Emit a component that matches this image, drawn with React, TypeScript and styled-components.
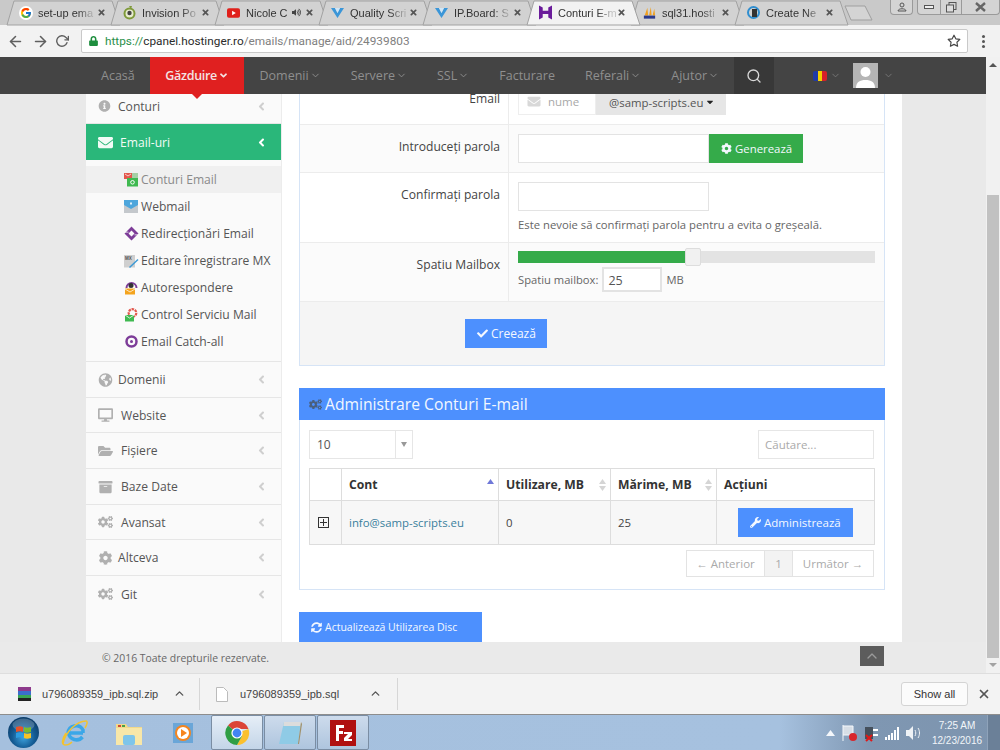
import React from 'react';
import styled, { createGlobalStyle } from 'styled-components';
import { FcGoogle } from 'react-icons/fc';
import {
  FaInfoCircle, FaEnvelope, FaGlobeAmericas, FaDesktop, FaFolderOpen, FaArchive, FaCogs, FaCog,
  FaAngleLeft, FaCheck, FaWrench, FaSyncAlt, FaCaretDown, FaLock, FaTimes, FaAngleDown, FaVolumeUp,
} from 'react-icons/fa';
import { FiArrowLeft, FiArrowRight, FiRotateCw, FiStar, FiSearch, FiChevronDown, FiChevronUp, FiX } from 'react-icons/fi';

const Global = createGlobalStyle`
  html, body { margin: 0; padding: 0; height: 100%; overflow: hidden; }
  * { box-sizing: border-box; }
  body { font-family: "Open Sans", "Liberation Sans", sans-serif; }
`;

const Screen = styled.div`
  width: 1000px; height: 750px; display: flex; flex-direction: column; overflow: hidden; background: #e9e9e9;
`;

/* ---------- browser chrome ---------- */
const TabStrip = styled.div`
  height: 25px; flex: none; background: #c9c9c9; display: flex; padding-left: 6px; position: relative;
`;
const Tab = styled.div<{ $active?: boolean }>`
  width: 104px; height: 25px; flex: none; position: relative; display: flex; align-items: center;
  padding: 0 0 0 13px; font-family: "Liberation Sans", sans-serif; font-size: 11px;
  color: #333; z-index: ${p => (p.$active ? 2 : 1)};
`;
const TabShapeSvg = styled.svg`
  position: absolute; left: 0; top: 0; z-index: -1; overflow: visible;
`;
const TabTitle = styled.span`
  margin-left: 6px; width: 58px; overflow: hidden; white-space: nowrap;
  -webkit-mask-image: linear-gradient(90deg, #000 68%, rgba(0,0,0,.25) 92%);
  mask-image: linear-gradient(90deg, #000 68%, rgba(0,0,0,.25) 92%);
`;
const TabSlot = styled.span`
  width: 13px; height: 13px; display: flex; align-items: center; justify-content: center; flex: none;
`;
const GoogleDisc = styled.span`
  width: 14px; height: 14px; flex: none; border-radius: 50%; background: #fff; display: flex; align-items: center; justify-content: center;
`;
const TabClose = styled(FaTimes)`
  position: absolute; left: 91px; top: 8px; width: 9px; height: 9px; color: #555;
`;
const TabSpeaker = styled(FaVolumeUp)`
  position: absolute; left: 78px; top: 8px; width: 9px; height: 9px; color: #444;
`;
const NewTab = styled.svg`
  position: absolute; left: 844px; top: 5px;
`;
const WindowGroup = styled.div<{ $left: number }>`
  position: absolute; left: ${p => p.$left}px; top: 0; height: 15px; display: flex; border: 1px solid #9a9a9a; border-top: none;
  border-radius: 0 0 4px 4px; background: #d4d4d4; overflow: hidden; color: #555;
`;
const WindowBtn = styled.span<{ $w: number }>`
  width: ${p => p.$w}px; display: flex; align-items: center; justify-content: center;
  & + & { border-left: 1px solid #9a9a9a; }
`;
const Toolbar = styled.div`
  height: 32px; flex: none; background: #f2f2f2; display: flex; align-items: center; color: #666;
`;
const NavIcon = styled.span<{ $w: number }>`
  width: ${p => p.$w}px; display: flex; justify-content: center; align-items: center; flex: none; color: #5f5f5f;
`;
const UrlBar = styled.div`
  width: 887px; height: 24px; margin-left: 7px; background: #fff; border: 1px solid #c9c9c9; border-radius: 2px;
  display: flex; align-items: center; padding: 0 6px 0 7px;
`;
const UrlLock = styled(FaLock)`
  width: 9px; height: 10px; color: #1e8e3e; margin-right: 7px; flex: none;
`;
const UrlText = styled.span`
  flex: 1; color: #808080; white-space: nowrap; font-family: "Roboto", sans-serif; font-size: 11.8px;
`;
const UrlGreen = styled.span` color: #2a8f4a; `;
const UrlDark = styled.span` color: #2b2b2b; `;
const Kebab = styled.span`
  width: 3px; height: 3px; border-radius: 50%; background: #555; display: block; box-shadow: 0 5px 0 #555, 0 -5px 0 #555; margin-left: 14px;
`;

const Viewport = styled.div`
  height: 616px; flex: none; display: flex;
`;
const PageCol = styled.div`
  width: 986px; flex: none; display: flex; flex-direction: column; position: relative;
`;
const Scrollbar = styled.div`
  width: 14px; flex: none; background: #f1f1f1; display: flex; flex-direction: column; align-items: center;
`;
const ScrollSpacer = styled.div` height: 128px; flex: none; `;
const ScrollThumb = styled.div` width: 12px; height: 463px; background: #c1c1c1; flex: none; `;
const ScrollArrow = styled.span<{ $up?: boolean }>`
  width: 0; height: 0; border-left: 4px solid transparent; border-right: 4px solid transparent;
  ${p => (p.$up ? 'border-bottom: 4px solid #555; margin-top: 6px;' : 'border-top: 4px solid #a3a3a3; margin-top: 5px;')}
`;

/* ---------- site nav ---------- */
const TopNav = styled.nav`
  height: 37px; flex: none; background: #444; display: flex; padding-left: 86px; position: relative; z-index: 3;
  font-size: 12.5px; color: #8f8f8f;
`;
const NavItem = styled.div<{ $active?: boolean }>`
  padding: 0 15px; display: flex; align-items: center; gap: 1px; white-space: nowrap; position: relative;
  ${p => p.$active && 'padding: 0 15.5px; background: #e02020; color: #f3e3e3; font-weight: 600; letter-spacing: -.3px;'}
`;
const NavTip = styled.span`
  position: absolute; left: 50%; bottom: -5px; margin-left: -5px; width: 0; height: 0;
  border-left: 5px solid transparent; border-right: 5px solid transparent; border-top: 5px solid #e02020;
`;
const SearchCell = styled.div`
  width: 40px; background: #383838; display: flex; align-items: center; justify-content: center; color: #d8d8d8;
`;
const FlagBox = styled.div`
  margin-left: 39px; display: flex; align-items: center; color: #777;
`;
const Flag = styled.div`
  width: 14px; height: 10px; display: flex; border-radius: 2px; overflow: hidden; margin-right: 3px;
`;
const FlagPart = styled.span<{ $c: string }>` flex: 1; background: ${p => p.$c}; `;
const Avatar = styled.div`
  width: 25px; height: 25px; background: #b5b5b5; margin: 6px 5px 0 12px; overflow: hidden;
`;
const AvatarChevron = styled.div`
  display: flex; align-items: center; color: #777;
`;

/* ---------- body ---------- */
const Body = styled.div`
  flex: 1; min-height: 0; display: flex; padding: 0 84px 0 86px; background: #e9e9e9;
`;
const Sidebar = styled.aside`
  width: 195px; flex: none; background: #fafafa; display: flex; flex-direction: column;
`;
const SideRow = styled.div<{ $h: number; $active?: boolean; $gap: number; $pb?: number; $last?: boolean }>`
  height: ${p => p.$h}px; flex: none; display: flex; align-items: center; padding: 0 15px ${p => p.$pb ?? 0}px 12px;
  color: ${p => (p.$active ? '#f2fbf6' : '#555')}; background: ${p => (p.$active ? '#2ab77a' : 'transparent')};
  font-size: 12.1px; border-bottom: ${p => (p.$active || p.$last ? 'none' : '1px solid #e6e6e6')};
  & > svg:first-child { color: ${p => (p.$active ? '#f2fbf6' : '#b0b0b0')}; width: ${p => p.$gap}px; flex: none; }
`;
const SideLabel = styled.span<{ $ml: number }>`
  flex: 1; margin-left: ${p => p.$ml}px; white-space: nowrap;
`;
const SideAngle = styled(FaAngleLeft)<{ $active?: boolean }>`
  width: 9px; height: 13px; color: ${p => (p.$active ? '#fff' : '#cfcfcf')}; flex: none;
`;
const SubMenu = styled.div`
  height: 202px; flex: none; padding-top: 6px; border-bottom: 1px solid #e6e6e6;
`;
const SubItem = styled.div<{ $current?: boolean }>`
  height: 27px; display: flex; align-items: center; padding-left: 38px; font-size: 12.1px; white-space: nowrap;
  color: ${p => (p.$current ? '#8a8a8a' : '#555')}; background: ${p => (p.$current ? '#f0f0f0' : 'transparent')};
`;
const SubIcon = styled.svg` width: 15px; height: 15px; flex: none; margin-right: 2px; `;

const Main = styled.main`
  width: 621px; flex: none; background: #fff; border-left: 1px solid #ececec; padding: 0 17px; display: flex; flex-direction: column; font-size: 12px; color: #444;
`;
const FormPanel = styled.section`
  height: 272px; flex: none; border: 1px solid #d6e4f6; border-top: none; display: flex; flex-direction: column;
`;
const FormRow = styled.div<{ $h: number; $alt?: boolean }>`
  height: ${p => p.$h}px; flex: none; display: grid; grid-template-columns: 209px 1fr;
  background: ${p => (p.$alt ? '#fbfbfb' : '#fff')}; border-bottom: 1px solid #ececec;
`;
const FormLabel = styled.div<{ $pt: number; $lh?: number }>`
  text-align: right; padding: ${p => p.$pt}px 8px 0 0; border-right: 1px solid #ececec; font-size: 12.1px; color: #444;
  line-height: ${p => p.$lh ?? 18}px;
`;
const FormValue = styled.div<{ $pt: number }>`
  padding: ${p => p.$pt}px 10px 0 9px; position: relative;
`;
const InputGroup = styled.div` display: flex; `;
const MailField = styled.div`
  width: 78px; height: 21px; border: 1px solid #eee; border-top: none; background: #fff; display: flex; align-items: center;
  padding: 0 0 5px 8px; font-size: 11.5px; color: #a8a8a8; gap: 7px;
`;
const MailIcon = styled(FaEnvelope)` width: 14px; height: 13px; color: #d8d8d8; `;
const DomainBtn = styled.div`
  width: 130px; height: 21px; background: #e6e6e6; display: flex; align-items: center; padding: 0 0 5px 13px; font-size: 11.4px; color: #555; gap: 3px;
`;
const Caret = styled(FaCaretDown)` width: 8px; height: 10px; color: #222; `;
const TextBox = styled.div`
  width: 191px; height: 29px; border: 1px solid #e3e3e3; background: #fff;
`;
const Hint = styled.div`
  margin-top: 6px; font-size: 11.3px; line-height: 16px; color: #666; white-space: nowrap;
`;
const SliderTrack = styled.div`
  height: 12px; background: #e3e3e3; position: relative; width: 357px;
`;
const SliderFill = styled.div`
  height: 100%; background: #35ab4a;
`;
const SliderHandle = styled.div`
  position: absolute; top: -3px; width: 16px; height: 18px; background: #f1f1f1; border: 1px solid #ddd; border-radius: 2px;
`;
const MailboxLine = styled.div`
  display: flex; align-items: center; margin-top: 4px; font-size: 11.2px; color: #666;
`;
const SmallInput = styled.div`
  width: 60px; height: 25px; margin: 0 4px; border: 2px solid #e3e3e3; background: #fff; color: #555; font-size: 12.5px; padding: 3px 4px; line-height: 18px;
`;
const FormFoot = styled.div`
  flex: 1; background: #f5f5f5; padding: 17px 0 0 165px;
`;
const ActionBtn = styled.div<{ $w: number; $h: number; $fs: number; $green?: boolean }>`
  width: ${p => p.$w}px; height: ${p => p.$h}px; background: ${p => (p.$green ? '#35ab4a' : '#4d90fe')}; color: #f4f8ff; font-size: ${p => p.$fs}px;
  display: flex; align-items: center; padding-left: 12px; gap: 3px; flex: none; white-space: nowrap;
`;
const ListPanel = styled.section`
  height: 202px; margin-top: 22px; flex: none; border: 1px solid #d6e4f6; border-top: none;
`;
const ListHead = styled.h2`
  height: 32px; margin: 0 -1px; padding-left: 10px; background: #4d90fe; color: #f2f7ff; font-weight: 400; font-size: 15.7px;
  display: flex; align-items: center; gap: 3px;
`;
const HeadIcon = styled(FaCogs)` width: 13px; height: 11px; color: #4a5f7d; `;
const ListBody = styled.div` padding: 10px 10px 0 9px; `;
const ListTools = styled.div`
  display: flex; justify-content: space-between; height: 29px; width: 565px;
`;
const PageSize = styled.div`
  width: 104px; border: 1px solid #e6e6e6; display: flex; font-size: 12px; color: #555; align-items: center;
`;
const PageSizeVal = styled.span`
  flex: 1; padding-left: 7px; line-height: 27px; border-right: 1px solid #e6e6e6; height: 100%;
`;
const PageSizeArrow = styled.span`
  width: 16px; display: flex; justify-content: center;
  &::before { content: ""; border-left: 3px solid transparent; border-right: 3px solid transparent; border-top: 5px solid #999; }
`;
const SearchBox = styled.div`
  width: 116px; border: 1px solid #e6e6e6; padding-left: 6px; line-height: 27px; font-size: 11.5px; color: #aaa;
`;
const Table = styled.table`
  margin-top: 9px; width: 566px; border-collapse: collapse; table-layout: fixed; font-size: 11.4px; color: #444;
`;
const Th = styled.th<{ $w?: number }>`
  width: ${p => (p.$w ? `${p.$w}px` : 'auto')}; height: 32px; border: 1px solid #ddd; text-align: left; padding: 0 7px; color: #333; font-size: 12.2px; position: relative; white-space: nowrap; font-weight: 700;
`;
const Td = styled.td`
  height: 44px; border: 1px solid #ddd; background: #f7f7f7; padding: 0 7px; white-space: nowrap;
`;
const SortIcon = styled.svg`
  position: absolute; right: 3px; top: 9px;
`;
const MailLink = styled.span` color: #3a7f9d; `;
const ExpandBox = styled.span`
  display: block; width: 11px; height: 11px; border: 1px solid #333; margin-left: 1px; position: relative;
  &::before { content: ""; position: absolute; left: 1px; right: 1px; top: 4px; height: 1px; background: #333; }
  &::after { content: ""; position: absolute; top: 1px; bottom: 1px; left: 4px; width: 1px; background: #333; }
`;
const ActionCell = styled.div` display: flex; justify-content: center; `;
const Pager = styled.div`
  display: flex; justify-content: flex-end; margin-top: 5px; width: 565px; font-size: 11.5px; color: #aaa;
`;
const PagerBtn = styled.div<{ $w: number; $cur?: boolean }>`
  width: ${p => p.$w}px; height: 27px; border: 1px solid #e3e3e3; display: flex; align-items: center; justify-content: center; white-space: nowrap;
  background: ${p => (p.$cur ? '#f3f3f3' : '#fff')}; & + & { border-left: none; }
`;
const RefreshRow = styled.div` margin-top: 22px; `;

const Footer = styled.footer`
  height: 31px; flex: none; background: #eaeaea; display: flex; align-items: center; padding: 0 102px; font-size: 10.4px; color: #666; justify-content: space-between;
`;
const ToTop = styled.div`
  width: 24px; height: 20px; background: #5c5c5c; color: #9a9a9a; display: flex; align-items: center; justify-content: center; margin-top: -4px;
`;

/* ---------- downloads ---------- */
const Downloads = styled.div`
  height: 42px; flex: none; background: #f3f3f3; border-top: 1px solid #dedede; border-bottom: 1px solid #8d8d8d; display: flex; align-items: center; font-family: "Liberation Sans", sans-serif; color: #444; font-size: 11px;
`;
const DlItem = styled.div<{ $w: number; $pl: number }>`
  width: ${p => p.$w}px; height: 32px; border-right: 1px solid #d6d6d6; display: flex; align-items: center; padding-left: ${p => p.$pl}px; position: relative; flex: none;
`;
const DlName = styled.span` margin-left: 10px; `;
const DlChevron = styled(FiChevronUp)<{ $left: number }>`
  position: absolute; left: ${p => p.$left}px; top: 9px; width: 13px; height: 13px; color: #555; stroke-width: 2.5;
`;
const DlSpacer = styled.div` flex: 1; `;
const ShowAll = styled.div`
  width: 67px; height: 24px; background: #fbfbfb; border: 1px solid #d4d4d4; border-radius: 3px; display: flex; align-items: center; justify-content: center; font-size: 11px; color: #333;
`;
const DlClose = styled(FiX)`
  width: 14px; height: 14px; margin: 0 9px; color: #555; stroke-width: 3;
`;

/* ---------- taskbar ---------- */
const Taskbar = styled.div`
  height: 35px; flex: none; background: linear-gradient(90deg, #a5c0de 0, #a6c1df 78%, #7f97b2 87%, #7d94ae 100%);
  display: flex; align-items: center; position: relative;
`;
const Orb = styled.svg` margin-left: 8px; flex: none; `;
const TaskSlot = styled.div<{ $w: number; $open?: boolean; $active?: boolean }>`
  width: ${p => p.$w}px; height: 35px; flex: none; display: flex; align-items: center; justify-content: center; border-radius: 2px;
  ${p => p.$open && `border: 1px solid #7a8da3; margin-right: 1px; background: ${p.$active ? 'linear-gradient(#e6eef7,#c3d5e8)' : 'linear-gradient(#cddbec,#aec5de)'};`}
`;
const Tray = styled.div`
  position: absolute; left: 826px; top: 0; height: 35px; display: flex; align-items: center; gap: 6px; color: #f4f7fb;
`;
const Clock = styled.div`
  position: absolute; left: 926px; top: 0; width: 62px; font-family: "Liberation Sans", sans-serif; height: 35px; font-size: 10px; color: #f2f5f9; text-align: center; line-height: 15px; padding-top: 3px; white-space: nowrap;
`;
const ShowDesktop = styled.div`
  position: absolute; right: 0; top: 0; width: 13px; height: 35px; background: #6b8098; border-left: 1px solid #8fa3ba;
`;

/* ---------- drawings ---------- */
const TabShape = ({ active }: { active?: boolean }) => (
  <TabShapeSvg width="116" height="25" viewBox="0 0 116 25">
    <path d="M1 25 L8 1 H106 L114 25 Z" fill={active ? '#f2f2f2' : '#d2d2d2'} stroke="#a2a2a2" strokeWidth="1" />
  </TabShapeSvg>
);
const Yt = () => (
  <svg width="14" height="10" viewBox="0 0 14 10"><rect width="14" height="10" rx="2" fill="#e0201b" /><path d="M5.500 2.500 9.500 5l-4 2.500z" fill="#fff" /></svg>
);
const Ips = () => (
  <svg width="13" height="14" viewBox="0 0 13 14"><circle cx="6.500" cy="7.500" r="5" fill="#e8ecd0" stroke="#7f9a3a" strokeWidth="2" /><circle cx="6.500" cy="7" r="2.200" fill="#444" /><path d="M6 0h3l-1 3z" fill="#7f9a3a" /></svg>
);
const Qs = () => (
  <svg width="13" height="12" viewBox="0 0 13 12"><path d="M0 1h4l2.500 5L9 1h4L6.500 11z" fill="#3b96d8" /><path d="M4 1h5L6.500 6z" fill="#cfe6f7" /></svg>
);
const Host = () => (
  <svg width="14" height="15" viewBox="0 0 14 15"><path d="M0 0l4 2v3.500h6V2l4-2v15l-4-2V9H4v4l-4 2z" fill="#6a1b9a" /></svg>
);
const Pma = () => (
  <svg width="15" height="14" viewBox="0 0 15 14"><path d="M2 10 5 1l1 9zM7 10l2-10 1 10zM11 10l2-8 1 8z" fill="#f0a020" /><rect x="1" y="10" width="13" height="3.500" fill="#2a3a8c" /></svg>
);
const Globe = () => (
  <svg width="13" height="13" viewBox="0 0 13 13"><circle cx="6.500" cy="6.500" r="5.500" fill="none" stroke="#2f8ed0" strokeWidth="2" /><rect x="5" y="3" width="5" height="8" fill="#333" /></svg>
);
const Chrome = ({ s = 26 }: { s?: number }) => (
  <svg width={s} height={s} viewBox="0 0 26 26">
    <path d="M13 13 4 5.500A12 12 0 0 1 24.500 9H13z" fill="#db4437" />
    <path d="M13 13 24.500 9A12 12 0 0 1 13 25l5-9z" fill="#fbc02d" />
    <path d="M13 13l5 3-5 9A12 12 0 0 1 4 5.500z" fill="#2f9e44" />
    <circle cx="13" cy="13" r="5.600" fill="#fff" /><circle cx="13" cy="13" r="4.400" fill="#4285f4" />
  </svg>
);
const Person = () => (
  <svg width="25" height="25" viewBox="0 0 25 25"><circle cx="12.500" cy="9" r="5" fill="#fff" /><path d="M3 25c0-6 4-8 9.500-8S22 19 22 25z" fill="#fff" /></svg>
);

type SubDef = { label: string; icon: React.ReactNode; current?: boolean };
const subItems: SubDef[] = [
  { label: 'Conturi Email', current: true, icon: <><rect x="0" y="1" width="8" height="6" fill="#e2574c" /><rect x="8" y="1" width="6" height="5" fill="#a5cfa5" /><rect x="3" y="6" width="11" height="8.500" fill="#3fb950" /><circle cx="8.500" cy="10.300" r="1.800" fill="none" stroke="#fff" /><path d="M1 2l3 2 3-2" fill="none" stroke="#fff" strokeWidth=".7" /></> },
  { label: 'Webmail', icon: <><rect x="0" y="4" width="14" height="10" fill="#c4c8cc" /><path d="M0 1h14v5l-7 4-7-4z" fill="#4ea6dc" /><path d="M6 3.500h2v2H6z" fill="#dff0fb" /></> },
  { label: 'Redirecționări Email', icon: <><path d="M7.500.500 14.500 7.500 7.500 14.500.500 7.500zM7.500 4.500 4.500 7.500 7.500 10.500 10.500 7.500z" fill="#7d3c98" fillRule="evenodd" /><path d="M1 5.800h3.500v.8H1zM10.500 8.400H14v.8h-3.500z" fill="#fafafa" /></> },
  { label: 'Editare înregistrare MX', icon: <><rect x="0" y="2" width="11" height="12.500" fill="#cfcfcf" /><text x="1" y="7" fontSize="4.500" fontWeight="700" fontFamily="Liberation Sans" fill="#555">MX</text><path d="M5 14 13.500 6l1 1L6 15z" fill="#3c9ad6" /></> },
  { label: 'Autorespondere', icon: <><path d="M2.500 8a5 5 0 0 1 10 0" fill="none" stroke="#7d3c98" strokeWidth="2" /><circle cx="7" cy="5.500" r="2.500" fill="#333" /><rect x="1" y="8.500" width="10" height="6" fill="#f4a41e" /><path d="M1 9l5 3 5-3" fill="none" stroke="#fff" strokeWidth=".7" /></> },
  { label: 'Control Serviciu Mail', icon: <><circle cx="8.500" cy="6" r="3.800" fill="none" stroke="#e2574c" strokeWidth="2.200" strokeDasharray="2.500 .8" /><rect x="1" y="8" width="9" height="6.500" fill="#3fb950" /><path d="M1 8l4.500 3L10 8" fill="none" stroke="#fff" strokeWidth=".8" /></> },
  { label: 'Email Catch-all', icon: <><circle cx="7.500" cy="7.500" r="5" fill="none" stroke="#7d3c98" strokeWidth="2.500" /><circle cx="7.500" cy="7.500" r="1.500" fill="#7d3c98" /></> },
];

const lowerRows = [
  { label: 'Domenii', Icon: FaGlobeAmericas, ml: 5, gap: 15, h: 36 },
  { label: 'Website', Icon: FaDesktop, ml: 8, gap: 15, h: 35 },
  { label: 'Fișiere', Icon: FaFolderOpen, ml: 8, gap: 15, h: 36 },
  { label: 'Baze Date', Icon: FaArchive, ml: 8, gap: 15, h: 36 },
  { label: 'Avansat', Icon: FaCogs, ml: 8, gap: 15, h: 35 },
  { label: 'Altceva', Icon: FaCog, ml: 5, gap: 15, h: 36 },
  { label: 'Git', Icon: FaCogs, ml: 8, gap: 15, h: 36 },
];

const tabs: { title: string; icon: React.ReactNode; active?: boolean; sound?: boolean }[] = [
  { title: 'set-up ema', icon: <GoogleDisc><FcGoogle size={12} /></GoogleDisc> },
  { title: 'Invision Po', icon: <Ips /> },
  { title: 'Nicole C', icon: <Yt />, sound: true },
  { title: 'Quality Scri', icon: <Qs /> },
  { title: 'IP.Board: S', icon: <Qs /> },
  { title: 'Conturi E-m', icon: <Host />, active: true },
  { title: 'sql31.hosti', icon: <Pma /> },
  { title: 'Create Ne', icon: <Globe /> },
];

const Sort = ({ up }: { up?: boolean }) => (
  <SortIcon width="9" height="14" viewBox="0 0 9 14">
    <path d="M4.500 1 8 6H1z" fill={up ? '#6f78d8' : '#d5d5d5'} />
    {!up && <path d="M4.500 13 1 8h7z" fill="#d5d5d5" />}
  </SortIcon>
);

export default function App() {
  return (
    <Screen>
      <Global />
      <TabStrip>
        {tabs.map(t => (
          <Tab key={t.title} $active={t.active}>
            <TabShape active={t.active} />
            <TabSlot>{t.icon}</TabSlot>
            <TabTitle>{t.title}</TabTitle>
            {t.sound && <TabSpeaker />}
            <TabClose />
          </Tab>
        ))}
        <NewTab width="30" height="16" viewBox="0 0 30 16"><path d="M1 1h20l7 14H7z" fill="#d4d4d4" stroke="#9f9f9f" /></NewTab>
        <WindowGroup $left={890}>
          <WindowBtn $w={21}><svg width="10" height="10" viewBox="0 0 10 10"><circle cx="5" cy="3" r="2" fill="none" stroke="#555" /><path d="M1 9c0-3 8-3 8 0z" fill="none" stroke="#555" /></svg></WindowBtn>
        </WindowGroup>
        <WindowGroup $left={917}>
          <WindowBtn $w={22}><svg width="10" height="4" viewBox="0 0 10 4"><rect x=".5" y=".5" width="9" height="3" fill="#eee" stroke="#555" /></svg></WindowBtn>
          <WindowBtn $w={21}><svg width="11" height="11" viewBox="0 0 11 11"><rect x="3" y=".5" width="7" height="7" fill="none" stroke="#555" /><rect x=".5" y="3" width="7" height="7" fill="#ddd" stroke="#555" /></svg></WindowBtn>
          <WindowBtn $w={38}><svg width="11" height="10" viewBox="0 0 11 10"><path d="M1 1l9 8M10 1 1 9" stroke="#666" strokeWidth="2.400" /></svg></WindowBtn>
        </WindowGroup>
      </TabStrip>
      <Toolbar>
        <NavIcon $w={30}><FiArrowLeft size={17} strokeWidth={2.2} /></NavIcon>
        <NavIcon $w={20}><FiArrowRight size={17} strokeWidth={2.2} /></NavIcon>
        <NavIcon $w={24}><FiRotateCw size={14} strokeWidth={2.4} /></NavIcon>
        <UrlBar>
          <UrlLock />
          <UrlText><UrlGreen>https://</UrlGreen><UrlDark>cpanel.hostinger.ro</UrlDark>/emails/manage/aid/24939803</UrlText>
          <FiStar size={14} color="#444" strokeWidth={2} />
        </UrlBar>
        <Kebab />
      </Toolbar>
      <Viewport>
        <PageCol>
          <TopNav>
            <NavItem>Acasă</NavItem>
            <NavItem $active>Găzduire<FaAngleDown size={11} /><NavTip /></NavItem>
            <NavItem>Domenii<FiChevronDown size={11} /></NavItem>
            <NavItem>Servere<FiChevronDown size={11} /></NavItem>
            <NavItem>SSL<FiChevronDown size={11} /></NavItem>
            <NavItem>Facturare</NavItem>
            <NavItem>Referali<FiChevronDown size={11} /></NavItem>
            <NavItem>Ajutor<FiChevronDown size={11} /></NavItem>
            <SearchCell><FiSearch size={16} /></SearchCell>
            <FlagBox>
              <Flag><FlagPart $c="#1f3aa8" /><FlagPart $c="#f5d000" /><FlagPart $c="#d8202a" /></Flag>
              <FiChevronDown size={11} />
            </FlagBox>
            <Avatar><Person /></Avatar>
            <AvatarChevron><FiChevronDown size={11} /></AvatarChevron>
          </TopNav>
          <Body>
            <Sidebar>
              <SideRow $h={30} $gap={13} $pb={5}>
                <FaInfoCircle size={12} />
                <SideLabel $ml={7}>Conturi</SideLabel>
                <SideAngle />
              </SideRow>
              <SideRow $h={36} $gap={15} $active>
                <FaEnvelope size={15} />
                <SideLabel $ml={7}>Email-uri</SideLabel>
                <SideAngle $active />
              </SideRow>
              <SubMenu>
                {subItems.map(s => (
                  <SubItem key={s.label} $current={s.current}>
                    <SubIcon viewBox="0 0 15 15">{s.icon}</SubIcon>
                    {s.label}
                  </SubItem>
                ))}
              </SubMenu>
              {lowerRows.map((r, i) => (
                <SideRow key={r.label} $h={r.h} $gap={r.gap} $last={i === lowerRows.length - 1}>
                  <r.Icon size={14} />
                  <SideLabel $ml={r.ml}>{r.label}</SideLabel>
                  <SideAngle />
                </SideRow>
              ))}
            </Sidebar>
            <Main>
              <FormPanel>
                <FormRow $h={31}>
                  <FormLabel $pt={0} $lh={10}>Email</FormLabel>
                  <FormValue $pt={0}>
                    <InputGroup>
                      <MailField><MailIcon />nume</MailField>
                      <DomainBtn>@samp-scripts.eu<Caret /></DomainBtn>
                    </InputGroup>
                  </FormValue>
                </FormRow>
                <FormRow $h={48} $alt>
                  <FormLabel $pt={13}>Introduceți parola</FormLabel>
                  <FormValue $pt={9}>
                    <InputGroup>
                      <TextBox />
                      <ActionBtn $green $w={94} $h={29} $fs={11.4}><FaCog size={11} />Generează</ActionBtn>
                    </InputGroup>
                  </FormValue>
                </FormRow>
                <FormRow $h={70}>
                  <FormLabel $pt={13}>Confirmați parola</FormLabel>
                  <FormValue $pt={9}>
                    <TextBox />
                    <Hint>Este nevoie să confirmați parola pentru a evita o greșeală.</Hint>
                  </FormValue>
                </FormRow>
                <FormRow $h={59} $alt>
                  <FormLabel $pt={13}>Spatiu Mailbox</FormLabel>
                  <FormValue $pt={8}>
                    <SliderTrack>
                      <SliderFill style={{ width: 170 }} />
                      <SliderHandle style={{ left: 167 }} />
                    </SliderTrack>
                    <MailboxLine>Spatiu mailbox:<SmallInput>25</SmallInput>MB</MailboxLine>
                  </FormValue>
                </FormRow>
                <FormFoot>
                  <ActionBtn $w={82} $h={29} $fs={12}><FaCheck size={11} />Creează</ActionBtn>
                </FormFoot>
              </FormPanel>
              <ListPanel>
                <ListHead><HeadIcon />Administrare Conturi E-mail</ListHead>
                <ListBody>
                  <ListTools>
                    <PageSize><PageSizeVal>10</PageSizeVal><PageSizeArrow /></PageSize>
                    <SearchBox>Căutare...</SearchBox>
                  </ListTools>
                  <Table>
                    <thead>
                      <tr>
                        <Th $w={32} />
                        <Th $w={157}>Cont<Sort up /></Th>
                        <Th $w={112}>Utilizare, MB<Sort /></Th>
                        <Th $w={106}>Mărime, MB<Sort /></Th>
                        <Th>Acțiuni</Th>
                      </tr>
                    </thead>
                    <tbody>
                      <tr>
                        <Td><ExpandBox /></Td>
                        <Td><MailLink>info@samp-scripts.eu</MailLink></Td>
                        <Td>0</Td>
                        <Td>25</Td>
                        <Td><ActionCell><ActionBtn $w={115} $h={29} $fs={11.5}><FaWrench size={11} />Administrează</ActionBtn></ActionCell></Td>
                      </tr>
                    </tbody>
                  </Table>
                  <Pager>
                    <PagerBtn $w={79}>← Anterior</PagerBtn>
                    <PagerBtn $w={28} $cur>1</PagerBtn>
                    <PagerBtn $w={81}>Următor →</PagerBtn>
                  </Pager>
                </ListBody>
              </ListPanel>
              <RefreshRow>
                <ActionBtn $w={183} $h={30} $fs={10.5}><FaSyncAlt size={11} />Actualizează Utilizarea Disc</ActionBtn>
              </RefreshRow>
            </Main>
          </Body>
          <Footer>
            <span>© 2016 Toate drepturile rezervate.</span>
            <ToTop><FiChevronUp size={16} /></ToTop>
          </Footer>
        </PageCol>
        <Scrollbar>
          <ScrollArrow $up />
          <ScrollSpacer />
          <ScrollThumb />
          <ScrollArrow />
        </Scrollbar>
      </Viewport>
      <Downloads>
        <DlItem $w={200} $pl={17}>
          <svg width="15" height="16" viewBox="0 0 15 16"><rect x="1" y="1" width="13" height="4" fill="#8e3a8c" /><rect x="1" y="5" width="13" height="4" fill="#3a6ecb" /><rect x="1" y="9" width="13" height="3" fill="#3aa655" /><rect x="1" y="12" width="13" height="3" fill="#222" /></svg>
          <DlName>u796089359_ipb.sql.zip</DlName>
          <DlChevron $left={173} />
        </DlItem>
        <DlItem $w={198} $pl={16}>
          <svg width="14" height="15" viewBox="0 0 14 15"><path d="M.5.5h7l4 4v10H.5z" fill="#fff" stroke="#bbb" /></svg>
          <DlName>u796089359_ipb.sql</DlName>
          <DlChevron $left={169} />
        </DlItem>
        <DlSpacer />
        <ShowAll>Show all</ShowAll>
        <DlClose />
      </Downloads>
      <Taskbar>
        <Orb width="31" height="31" viewBox="0 0 31 31">
          <defs>
            <radialGradient id="orbFill" cx="50%" cy="65%" r="60%">
              <stop offset="0" stopColor="#3fa4e0" />
              <stop offset=".6" stopColor="#145c95" />
              <stop offset="1" stopColor="#0d3f6c" />
            </radialGradient>
          </defs>
          <circle cx="15.500" cy="15.500" r="15.500" fill="url(#orbFill)" />
          <ellipse cx="15.500" cy="8" rx="11" ry="6.500" fill="#fff" opacity=".22" />
          <path d="M8 10c3-1 5-1 7 0v5c-2-1-4-1-7 0z" fill="#e5522b" />
          <path d="M16 10c2 1 4 1 7 0v5c-3 1-5 1-7 0z" fill="#7cbb2d" />
          <path d="M8 16c3-1 5-1 7 0v5c-2-1-4-1-7 0z" fill="#2e9ce0" />
          <path d="M16 16c2 1 4 1 7 0v5c-3 1-5 1-7 0z" fill="#f8c326" />
        </Orb>
        <TaskSlot $w={17} />
        <TaskSlot $w={38}>
          <svg width="28" height="28" viewBox="0 0 28 28"><path d="M22 14H7M7 14a8 8 0 0 1 15-3v3M21.500 18a8 8 0 0 1-14-4" fill="none" stroke="#3ba7e8" strokeWidth="3.500" /><path d="M2 25C4 13 16 2 25 2c2 0 1 4-1 7M5 14C1 20 0 26 4 26c2 0 5-1 7-3" fill="none" stroke="#f2c230" strokeWidth="1.500" /></svg>
        </TaskSlot>
        <TaskSlot $w={16} />
        <TaskSlot $w={38}>
          <svg width="28" height="26" viewBox="0 0 28 26"><path d="M1 4h10l2 3h14v18H1z" fill="#f2d98a" /><rect x="1" y="8" width="26" height="17" fill="#f8e7a8" /><rect x="8" y="15" width="12" height="10" rx="2" fill="#7ec5ea" /><rect x="3" y="5" width="3" height="2" fill="#d04a3a" /><rect x="7" y="5" width="3" height="2" fill="#4aa04a" /></svg>
        </TaskSlot>
        <TaskSlot $w={18} />
        <TaskSlot $w={36}>
          <svg width="24" height="24" viewBox="0 0 24 24"><rect x="1" y="2" width="20" height="20" fill="#6aa6d8" /><circle cx="11" cy="12" r="8" fill="#f6851f" /><circle cx="11" cy="12" r="6" fill="#fff" /><path d="M9 8l6 4-6 4z" fill="#f6851f" /></svg>
        </TaskSlot>
        <TaskSlot $w={9} />
        <TaskSlot $w={52} $open $active><Chrome /></TaskSlot>
        <TaskSlot $w={52} $open>
          <svg width="28" height="28" viewBox="0 0 28 28"><path d="M8 3h17l-3 22H3z" fill="#8fcbe6" /><path d="M8 3h17l-.5 4H7.300z" fill="#dcdcdc" /><path d="M22 25 25 3l1 2-3 20z" fill="#a0906a" /></svg>
        </TaskSlot>
        <TaskSlot $w={52} $open>
          <svg width="28" height="28" viewBox="0 0 28 28"><rect x="1" y="1" width="26" height="26" fill="#b01010" /><path d="M7 6h8v3h-5v3h4v3h-4v7H7zM15 13h8v3l-4 4h4v2h-8v-3l4-4h-4z" fill="#fff" /></svg>
        </TaskSlot>
        <Tray>
          <svg width="9" height="6" viewBox="0 0 9 6"><path d="M4.500 0 9 6H0z" fill="#f4f7fb" /></svg>
          <svg width="17" height="18" viewBox="0 0 17 18"><path d="M2 1v16M2 2h10v9H2" fill="#d7dee6" stroke="#f4f7fb" /><circle cx="12" cy="13" r="4" fill="#d8262c" /></svg>
          <svg width="15" height="18" viewBox="0 0 15 18"><rect x="1" y="3" width="8" height="12" fill="#45505c" /><path d="M9 6h5M9 11h5" stroke="#fff" strokeWidth="2" /><path d="M2 11l6 6M8 11l-6 6" stroke="#e01818" strokeWidth="2" /></svg>
          <svg width="15" height="14" viewBox="0 0 15 14"><rect x="0" y="11" width="2" height="3" fill="#fff" /><rect x="3" y="9" width="2" height="5" fill="#fff" /><rect x="6" y="7" width="2" height="7" fill="#fff" /><rect x="9" y="4" width="2" height="10" fill="#fff" /><rect x="12" y="1" width="2" height="13" fill="#fff" /></svg>
          <svg width="15" height="14" viewBox="0 0 15 14"><path d="M0 4h3l4-4v14l-4-4H0z" fill="#eef2f6" /><path d="M9 4c1 2 1 4 0 6M12 2c2 3 2 7 0 10" fill="none" stroke="#eef2f6" /></svg>
        </Tray>
        <Clock>7:25 AM<br />12/23/2016</Clock>
        <ShowDesktop />
      </Taskbar>
    </Screen>
  );
}
